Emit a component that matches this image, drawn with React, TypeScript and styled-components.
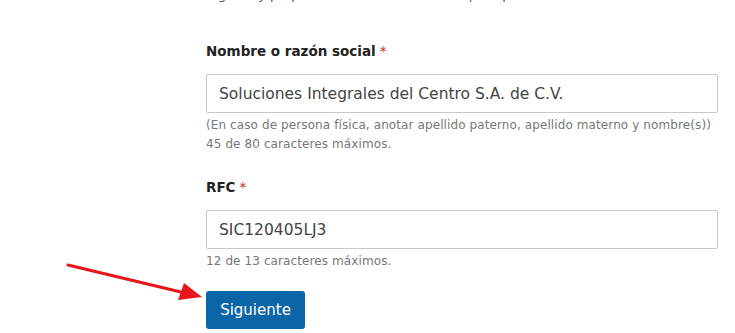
import React from "react";
import styled, { createGlobalStyle } from "styled-components";

const Global = createGlobalStyle`
  html, body { margin: 0; padding: 0; background: #fff; }
  body { font-family: "DejaVu Sans", "Open Sans", sans-serif; overflow: hidden; }
`;

const Page = styled.div`
  position: relative;
  width: 735px;
  height: 333px;
  overflow: hidden;
`;

const Form = styled.form`
  display: flex;
  flex-direction: column;
  width: 512px;
  margin-left: 206px;
`;

const Intro = styled.p`
  margin: -13px 0 0;
  font-size: 13px;
  line-height: 16px;
  color: #555;
`;

const Field = styled.div<{ $top: number }>`
  display: flex;
  flex-direction: column;
  margin-top: ${(p) => p.$top}px;
`;

const Label = styled.label`
  font-size: 13.5px;
  font-weight: 700;
  color: #222;
  line-height: 18px;
  margin-bottom: 14px;
`;

const Req = styled.span`
  color: #c0392b;
  font-weight: 400;
  margin-left: 4px;
`;

const Input = styled.input`
  box-sizing: border-box;
  width: 100%;
  height: 39px;
  border: 1px solid #c8c8c8;
  border-radius: 2px;
  padding: 0 12px;
  font-family: inherit;
  font-size: 15.5px;
  color: #444;
  background: #fff;
  outline: none;
`;

const Help = styled.div`
  font-size: 12px;
  letter-spacing: 0.1px;
  line-height: 19px;
  color: #777;
  margin-top: 3px;
  white-space: nowrap;
`;

const Button = styled.button`
  align-self: flex-start;
  margin-top: 20px;
  width: 99px;
  height: 38px;
  border: none;
  border-radius: 3px;
  background: #0b65a6;
  color: #fff;
  font-family: inherit;
  font-size: 15px;
  cursor: pointer;
`;

const Arrow = styled.svg`
  position: absolute;
  left: 60px;
  top: 255px;
`;

export default function App() {
  return (
    <Page>
      <Global />
      <Form onSubmit={(e) => e.preventDefault()}>
        <Intro>Ingresa y proporciona tus datos fiscales para poder facturar.</Intro>
        <Field $top={39}>
          <Label>
            Nombre o razón social<Req>*</Req>
          </Label>
          <Input defaultValue="Soluciones Integrales del Centro S.A. de C.V." />
          <Help>
            (En caso de persona física, anotar apellido paterno, apellido materno y nombre(s))
            <br />
            45 de 80 caracteres máximos.
          </Help>
        </Field>
        <Field $top={24}>
          <Label>
            RFC<Req>*</Req>
          </Label>
          <Input defaultValue="SIC120405LJ3" />
          <Help>12 de 13 caracteres máximos.</Help>
        </Field>
        <Button type="submit">Siguiente</Button>
      </Form>
      <Arrow width="150" height="50" viewBox="0 0 150 50">
        <line x1="8" y1="10" x2="125" y2="38" stroke="#e8151b" strokeWidth="3" strokeLinecap="round" />
        <polygon points="142,42 118,45 124,28" fill="#e8151b" />
      </Arrow>
    </Page>
  );
}
